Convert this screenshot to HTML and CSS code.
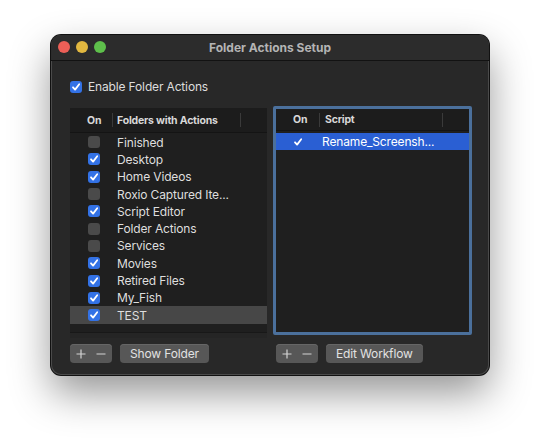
FILE: index.html
```html
<!DOCTYPE html>
<html>
<head>
<meta charset="utf-8">
<link rel="stylesheet" href="styles.css">
</head>
<body>
<div class="stage">
  <div class="window">
    <div class="titlebar">
      <div class="lights">
        <span class="light red"></span>
        <span class="light yellow"></span>
        <span class="light green"></span>
      </div>
      <div class="title">Folder Actions Setup</div>
    </div>
    <div class="content">
      <label class="enable">
        <span class="cb on"><svg viewBox="0 0 12 12"><path d="M3 6.3 L5.1 8.6 L9.2 3.3" /></svg></span>
        <span>Enable Folder Actions</span>
      </label>
      <div class="panes">
        <div class="table left">
          <div class="thead">
            <span class="h-on">On</span>
            <span class="sep"></span>
            <span class="h-name">Folders with Actions</span>
            <span class="sep sep-end"></span>
          </div>
          <div class="tbody">
            <div class="row"><span class="cb"></span><span class="name">Finished</span></div>
            <div class="row"><span class="cb on"><svg viewBox="0 0 12 12"><path d="M3 6.3 L5.1 8.6 L9.2 3.3" /></svg></span><span class="name">Desktop</span></div>
            <div class="row"><span class="cb on"><svg viewBox="0 0 12 12"><path d="M3 6.3 L5.1 8.6 L9.2 3.3" /></svg></span><span class="name">Home Videos</span></div>
            <div class="row"><span class="cb"></span><span class="name">Roxio Captured Ite...</span></div>
            <div class="row"><span class="cb on"><svg viewBox="0 0 12 12"><path d="M3 6.3 L5.1 8.6 L9.2 3.3" /></svg></span><span class="name">Script Editor</span></div>
            <div class="row"><span class="cb"></span><span class="name">Folder Actions</span></div>
            <div class="row"><span class="cb"></span><span class="name">Services</span></div>
            <div class="row"><span class="cb on"><svg viewBox="0 0 12 12"><path d="M3 6.3 L5.1 8.6 L9.2 3.3" /></svg></span><span class="name">Movies</span></div>
            <div class="row"><span class="cb on"><svg viewBox="0 0 12 12"><path d="M3 6.3 L5.1 8.6 L9.2 3.3" /></svg></span><span class="name">Retired Files</span></div>
            <div class="row"><span class="cb on"><svg viewBox="0 0 12 12"><path d="M3 6.3 L5.1 8.6 L9.2 3.3" /></svg></span><span class="name">My_Fish</span></div>
            <div class="row sel-gray"><span class="cb on"><svg viewBox="0 0 12 12"><path d="M3 6.3 L5.1 8.6 L9.2 3.3" /></svg></span><span class="name">TEST</span></div>
          </div>
        </div>
        <div class="focus">
          <div class="table right">
            <div class="thead">
              <span class="h-on">On</span>
              <span class="sep"></span>
              <span class="h-name">Script</span>
              <span class="sep sep-end"></span>
            </div>
            <div class="tbody">
              <div class="row sel-blue"><span class="cb on"><svg viewBox="0 0 12 12"><path d="M3 6.3 L5.1 8.6 L9.2 3.3" /></svg></span><span class="name">Rename_Screensh...</span></div>
            </div>
          </div>
        </div>
        <div class="buttons">
          <div class="seg">
            <svg class="pm" viewBox="0 0 10 10"><path d="M5 0.5 V9.5 M0.5 5 H9.5" /></svg>
            <svg class="pm" viewBox="0 0 10 10"><path d="M0.5 5 H9.5" /></svg>
          </div>
          <div class="btn">Show Folder</div>
        </div>
        <div class="buttons buttons-right">
          <div class="seg">
            <svg class="pm" viewBox="0 0 10 10"><path d="M5 0.5 V9.5 M0.5 5 H9.5" /></svg>
            <svg class="pm" viewBox="0 0 10 10"><path d="M0.5 5 H9.5" /></svg>
          </div>
          <div class="btn">Edit Workflow</div>
        </div>
      </div>
    </div>
  </div>
</div>
</body>
</html>
```

FILE: styles.css
```css
html, body {
  margin: 0;
  padding: 0;
  background: #ffffff;
}
body {
  font-family: Inter, "Noto Sans", "Liberation Sans", sans-serif;
  font-size: 12px;
  color: #dddddd;
}
.stage {
  padding: 35px 0 0 51px;
  height: 443px;
  box-sizing: border-box;
}
.window {
  width: 438px;
  height: 340px;
  background: #282828;
  border-radius: 10px;
  box-shadow: 0 0 0 1px #111, inset 0 0 0 1px #4a4a4a, 0 18px 40px rgba(0,0,0,0.42);
  display: flex;
  flex-direction: column;
  overflow: hidden;
}
.titlebar {
  height: 25px;
  border-bottom: 1px solid #121212;
  background: #2c2c2c;
  position: relative;
  display: flex;
  align-items: center;
  justify-content: center;
}
.lights {
  position: absolute;
  left: 7px;
  top: 6px;
  display: flex;
  gap: 6px;
}
.light {
  width: 12px;
  height: 12px;
  border-radius: 50%;
}
.red { background: #ec5f57; }
.yellow { background: #e2b840; }
.green { background: #5ec04b; }
.title {
  font-weight: 700;
  font-size: 12px;
  color: #b4b4b4;
}
.content {
  padding: 19px 17px 0 19px;
}
.enable {
  display: flex;
  align-items: center;
  gap: 6px;
  height: 13px;
  font-size: 12px;
  letter-spacing: -0.15px;
}
.cb {
  width: 12px;
  height: 12px;
  border-radius: 3px;
  background: #4a4a4a;
  display: inline-flex;
  align-items: center;
  justify-content: center;
  flex: none;
}
.cb.on {
  background: #3372e6;
}
.cb svg {
  width: 12px;
  height: 12px;
  fill: none;
  stroke: #ffffff;
  stroke-width: 1.8;
  stroke-linecap: round;
  stroke-linejoin: round;
}
.panes {
  margin-top: 15px;
  display: grid;
  grid-template-columns: 197px 199px;
  column-gap: 6px;
  row-gap: 6px;
}
.table {
  background: #1f1f1f;
}
.table.left {
  height: 230px;
  border-bottom: 5px solid #252525;
  box-sizing: border-box;
  box-shadow: inset 0 -1px 0 #181818;
}
.focus {
  margin-top: -2px;
  height: 229px;
  border: 3px solid #4b709c;
  border-radius: 2px;
  box-sizing: border-box;
  background: #1f1f1f;
}
.thead {
  height: 25px;
  border-bottom: 1px solid #141414;
  box-sizing: border-box;
  display: flex;
  align-items: center;
  font-weight: 700;
  font-size: 10.5px;
  letter-spacing: -0.2px;
  color: #d8d8d8;
  background: #1c1c1c;
}
.h-on {
  width: 42px;
  padding-left: 17px;
  box-sizing: border-box;
}
.sep {
  width: 1px;
  height: 14px;
  background: #3a3a3a;
}
.h-name {
  padding-left: 4px;
  flex: 1;
}
.sep-end {
  margin-right: 26px;
}
.right .thead {
  height: 22px;
}
.right .h-on {
  width: 43px;
  padding-left: 17px;
}
.right .h-name {
  padding-left: 5px;
}
.tbody {
  padding-top: 0.5px;
}
.row {
  height: 17.3px;
  display: flex;
  align-items: center;
  font-size: 12px;
  letter-spacing: -0.15px;
  color: #dedede;
}
.row .cb {
  margin-left: 18px;
}
.row .name {
  margin-left: 17px;
  white-space: nowrap;
}
.sel-gray {
  background: #474747;
}
.right .tbody {
  padding-top: 2px;
}
.right .row .cb {
  margin-left: 16px;
}
.right .row .name {
  margin-left: 18px;
}
.sel-blue {
  background: #2a5fd3;
  color: #ffffff;
}
.sel-blue .cb.on {
  background: #2a5fd3;
}
.buttons {
  display: flex;
  gap: 8px;
  height: 19px;
}
.buttons-right {
  padding-left: 3px;
}
.seg {
  width: 42px;
  height: 19px;
  border-radius: 4px;
  background: #575757;
  box-shadow: inset 0 1px 0 #666;
  display: flex;
  align-items: center;
  justify-content: space-between;
  padding: 0 6px;
  box-sizing: border-box;
}
.pm {
  width: 10px;
  height: 10px;
  fill: none;
  stroke: #d4d4d4;
  stroke-width: 1.2;
}
.btn {
  height: 19px;
  padding: 0 10px;
  border-radius: 4px;
  background: #575757;
  display: flex;
  align-items: center;
  font-size: 12px;
  letter-spacing: -0.15px;
  color: #e2e2e2;
  box-shadow: inset 0 1px 0 #666;
}
```
